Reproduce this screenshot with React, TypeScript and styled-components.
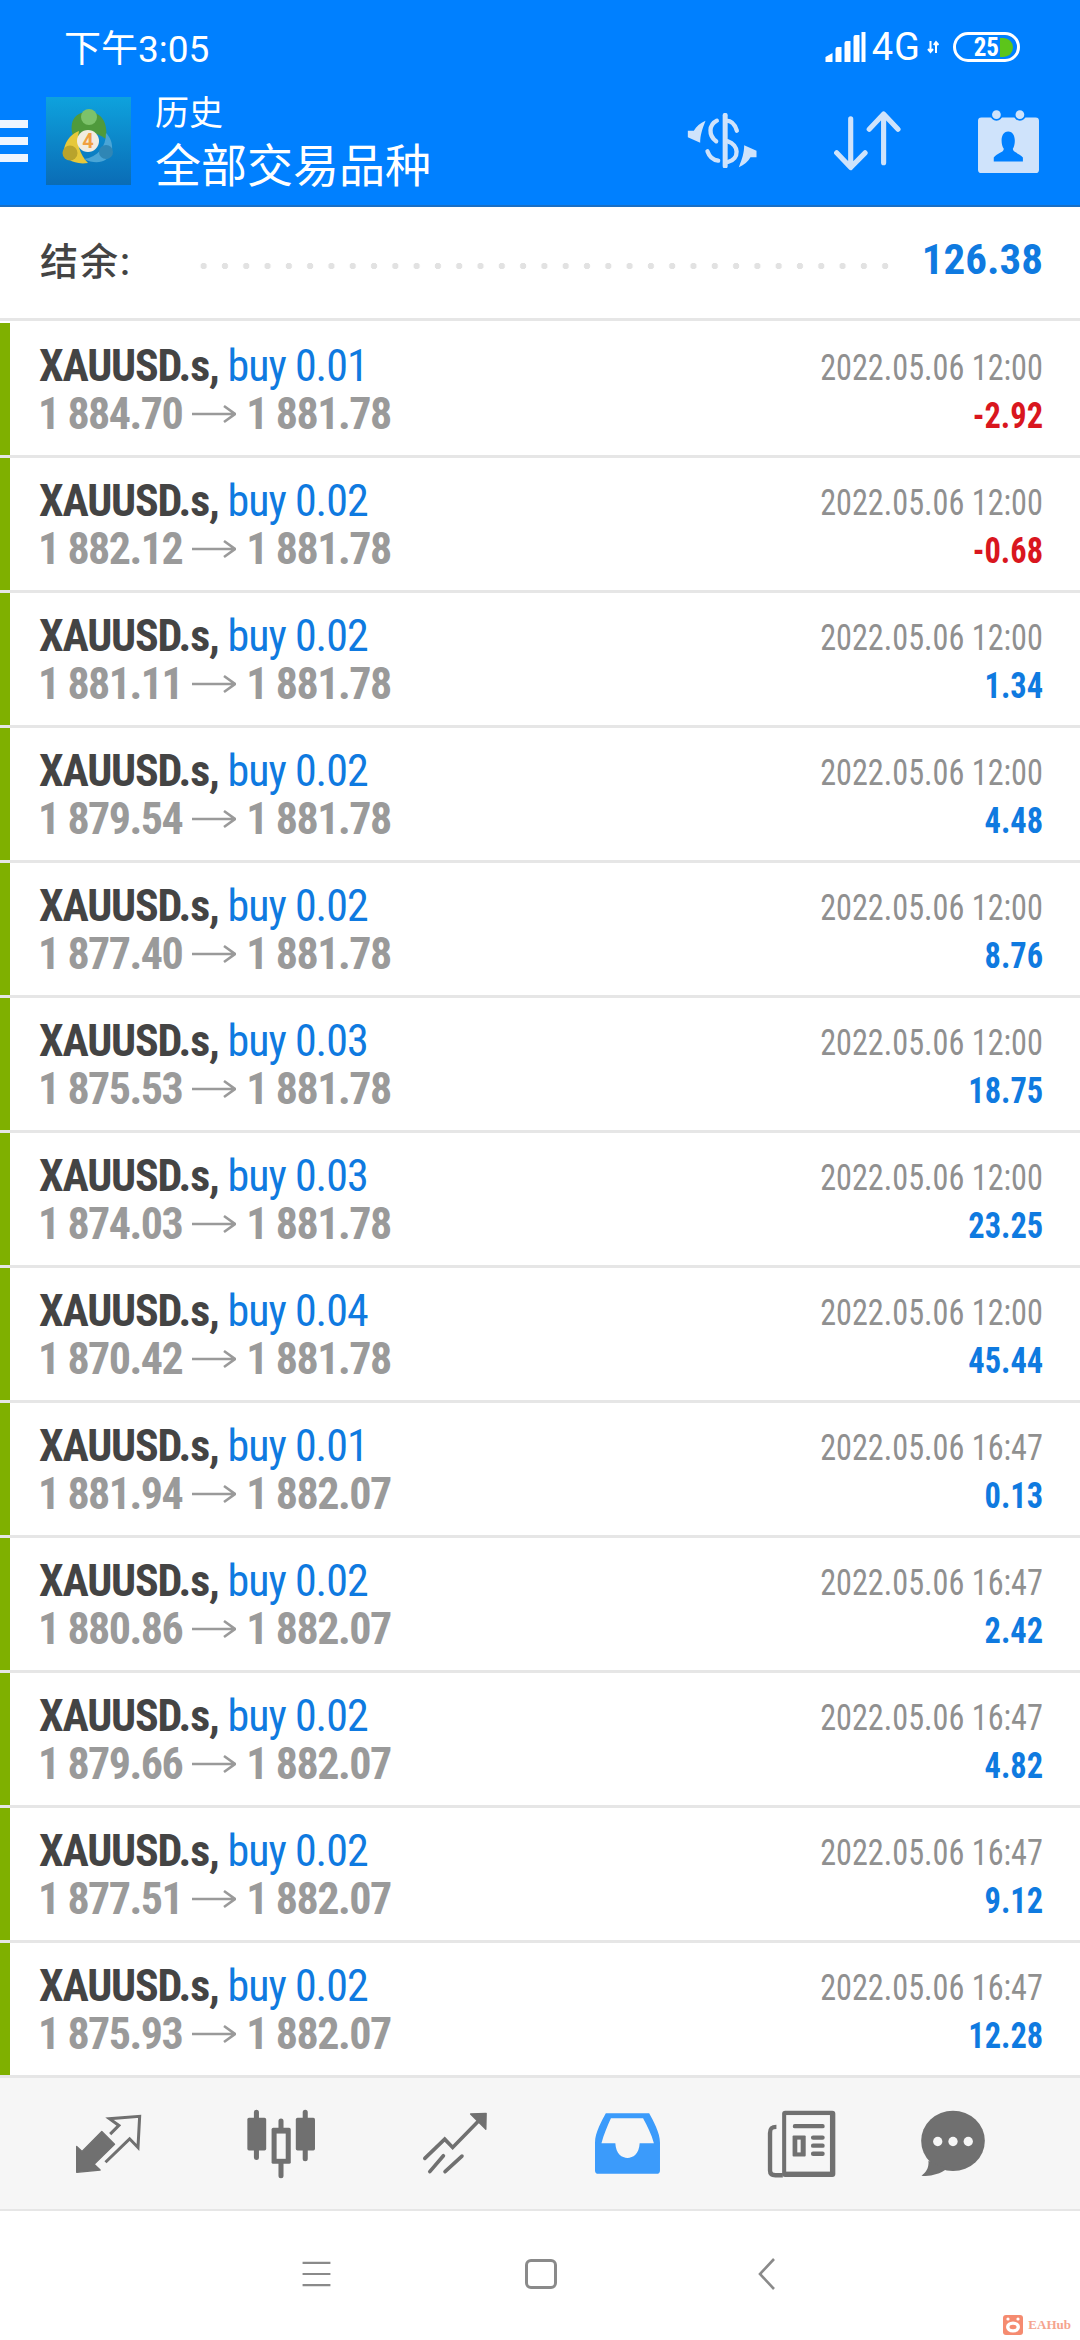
import React from "react";
import styled, { createGlobalStyle } from "styled-components";

type Trade = { lot: string; open: string; close: string; time: string; profit: string };

const trades: Trade[] = [
  { lot: "0.01", open: "1 884.70", close: "1 881.78", time: "2022.05.06 12:00", profit: "-2.92" },
  { lot: "0.02", open: "1 882.12", close: "1 881.78", time: "2022.05.06 12:00", profit: "-0.68" },
  { lot: "0.02", open: "1 881.11", close: "1 881.78", time: "2022.05.06 12:00", profit: "1.34" },
  { lot: "0.02", open: "1 879.54", close: "1 881.78", time: "2022.05.06 12:00", profit: "4.48" },
  { lot: "0.02", open: "1 877.40", close: "1 881.78", time: "2022.05.06 12:00", profit: "8.76" },
  { lot: "0.03", open: "1 875.53", close: "1 881.78", time: "2022.05.06 12:00", profit: "18.75" },
  { lot: "0.03", open: "1 874.03", close: "1 881.78", time: "2022.05.06 12:00", profit: "23.25" },
  { lot: "0.04", open: "1 870.42", close: "1 881.78", time: "2022.05.06 12:00", profit: "45.44" },
  { lot: "0.01", open: "1 881.94", close: "1 882.07", time: "2022.05.06 16:47", profit: "0.13" },
  { lot: "0.02", open: "1 880.86", close: "1 882.07", time: "2022.05.06 16:47", profit: "2.42" },
  { lot: "0.02", open: "1 879.66", close: "1 882.07", time: "2022.05.06 16:47", profit: "4.82" },
  { lot: "0.02", open: "1 877.51", close: "1 882.07", time: "2022.05.06 16:47", profit: "9.12" },
  { lot: "0.02", open: "1 875.93", close: "1 882.07", time: "2022.05.06 16:47", profit: "12.28" },
];

const App = () => {
  return (
    <>
      <GlobalStyle />
      <Page>
        <Header>
          <StatusBar>
            <Clock>下午3:05</Clock>
            <StatusRight>
              <svg width="41" height="30" viewBox="0 0 40 30">
                <path d="M0 30V25L7 21V30Z M10 30V17Q10 15 12 15H16V30Z M19 30V11Q19 9 21 9H25V30Z M28 30V5Q28 3 30 3H34V30Z" fill="#fff" />
                <rect x="36" y="0" width="4" height="30" fill="#fff" />
              </svg>
              <Network>4G</Network>
              <svg width="12" height="14" viewBox="0 0 12 14">
                <path d="M3.5 1V12M1 9L3.5 12L6 9M9 13V2M6.8 5L9 2L11.5 5" stroke="#fff" strokeWidth="2" fill="none" />
              </svg>
              <Battery>
                <BatteryLevel>25</BatteryLevel>
                <BatteryFill />
              </Battery>
            </StatusRight>
          </StatusBar>
          <ToolBar>
            <Burger>
              <span />
              <span />
              <span />
            </Burger>
            <LogoIcon />
            <TitleBlock>
              <SubTitle>历史</SubTitle>
              <Title>全部交易品种</Title>
            </TitleBlock>
            <ToolIcons>
              <SwapIcon />
              <SortIcon />
              <ContactIcon />
            </ToolIcons>
          </ToolBar>
        </Header>

        <BalanceRow>
          <BalanceLabel>结余:</BalanceLabel>
          <Dots />
          <BalanceValue>126.38</BalanceValue>
        </BalanceRow>

        <List>
          {trades.map((t, i) => (
            <Row key={i}>
              <Marker />
              <RowBody>
                <RowLeft>
                  <Line>
                    <Symbol>XAUUSD.s,</Symbol>
                    <Lot>buy {t.lot}</Lot>
                  </Line>
                  <PriceLine>
                    <Price>{t.open}</Price>
                    <ArrowIcon />
                    <Price>{t.close}</Price>
                  </PriceLine>
                </RowLeft>
                <RowRight>
                  <Line>
                    <Time>{t.time}</Time>
                  </Line>
                  <Line>
                    <Profit $loss={t.profit.startsWith("-")}>{t.profit}</Profit>
                  </Line>
                </RowRight>
              </RowBody>
            </Row>
          ))}
        </List>

        <TabBar>
          <TradeIcon />
          <CandleIcon />
          <TrendIcon />
          <InboxIcon />
          <NewsIcon />
          <ChatIcon />
        </TabBar>

        <NavBar>
          <svg width="29" height="26" viewBox="0 0 30 28">
            <path d="M0 2H30M0 14H30M0 26H30" stroke="#8a8a8a" strokeWidth="2.4" />
          </svg>
          <NavSquare />
          <svg width="18" height="34" viewBox="0 0 18 34">
            <path d="M16 2L2 17L16 32" stroke="#8a8a8a" strokeWidth="2.6" fill="none" />
          </svg>
        </NavBar>

        <Watermark>
          <svg width="20" height="20" viewBox="0 0 20 20">
            <rect width="20" height="20" rx="3" fill="#f58b70" />
            <ellipse cx="10" cy="12" rx="7" ry="5.5" fill="#fff" />
            <circle cx="5" cy="4" r="1.6" fill="#fff" />
            <circle cx="15" cy="4" r="1.6" fill="#fff" />
            <ellipse cx="10" cy="12" rx="3.5" ry="2.2" fill="#f58b70" />
          </svg>
          EAHub
        </Watermark>
      </Page>
    </>
  );
};

const LogoIcon = () => (
  <Logo viewBox="0 0 85 88">
    <defs>
      <linearGradient id="logoBg" x1="0" y1="0" x2="0" y2="1">
        <stop offset="0" stopColor="#0ea2dd" />
        <stop offset="1" stopColor="#0a6cb6" />
      </linearGradient>
    </defs>
    <rect width="85" height="88" fill="url(#logoBg)" />
    <path d="M28 42C22 26 28 15 42 15C56 15 62 26 60 42C50 34 38 34 28 42Z" fill="#4f9a3c" />
    <circle cx="43" cy="20" r="8" fill="#7cc26a" />
    <path d="M42 66C28 68 18 62 18 52C20 42 27 36 33 34C30 46 34 58 42 66Z" fill="#e6c83a" />
    <circle cx="24" cy="56" r="7.5" fill="#b9a32c" />
    <path d="M38 62C50 68 62 66 66 54C67 46 64 40 60 36C60 50 52 60 38 62Z" fill="#4aa5d6" />
    <circle cx="60" cy="55" r="7" fill="#2f86b5" />
    <circle cx="42" cy="44" r="11" fill="#f1ece0" />
    <LogoDigit x="42" y="51" textAnchor="middle">4</LogoDigit>
  </Logo>
);

const SwapIcon = () => (
  <HeadIcon width="72" height="55" viewBox="420 335 215 165">
    <path d="M537 342V494" stroke="#cfe3fb" strokeWidth="15" strokeLinecap="round" fill="none" />
    <path d="M572 388C566 368 553 358 540 358M512 358C488 370 486 402 510 420M545 420C578 430 582 472 545 482M484 450C490 468 502 476 516 478" stroke="#cfe3fb" strokeWidth="13" strokeLinecap="round" fill="none" />
    <path d="M478 358C468 385 462 400 462 424L425 408L425 388L443 388C450 375 462 365 478 358Z" fill="#cfe3fb" />
    <path d="M478 358C468 385 462 400 462 424L425 408L425 388L443 388C450 375 462 365 478 358Z" fill="#cfe3fb" transform="rotate(180 528 428)" />
  </HeadIcon>
);

const SortIcon = () => (
  <HeadIcon width="69" height="60" viewBox="845 335 200 175">
    <path d="M896 358V498M855 457L896 500L938 457M992 486V344M950 388L992 344L1034 388" stroke="#cfe3fb" strokeWidth="15" strokeLinecap="round" strokeLinejoin="round" fill="none" />
  </HeadIcon>
);

const ContactIcon = () => (
  <HeadIcon width="63" height="66" viewBox="1265 322 188 197">
    <rect x="1268" y="350" width="182" height="166" rx="10" fill="#cfe3fb" />
    <circle cx="1323" cy="342" r="18" fill="#0080ff" />
    <circle cx="1393" cy="342" r="18" fill="#0080ff" />
    <circle cx="1323" cy="342" r="13" fill="#cfe3fb" />
    <circle cx="1393" cy="342" r="13" fill="#cfe3fb" />
    <path d="M1315 482V470C1325 456 1345 456 1345 444C1335 430 1334 392 1358 392C1382 392 1381 430 1372 444C1372 456 1392 456 1402 470V482Z" fill="#0080ff" />
  </HeadIcon>
);

const ArrowIcon = () => (
  <ArrowSvg width="44" height="20" viewBox="0 0 44 20">
    <path d="M0 10H42M32 2L43 10L32 18" stroke="#9a9a9a" strokeWidth="2.6" fill="none" />
  </ArrowSvg>
);

const TradeIcon = () => (
  <TabIcon width="67" height="62" viewBox="215 155 200 185">
    <path d="M220 255L236 270L295 210L333 248L272 308L290 325L220 332Z" fill="#707070" stroke="#707070" strokeWidth="4" strokeLinejoin="round" />
    <path d="M320 218L346 192L318 172L408 165L403 258L378 232L306 302" stroke="#707070" strokeWidth="9" fill="none" />
  </TabIcon>
);

const CandleIcon = () => (
  <TabIcon width="70" height="70" viewBox="712 142 208 208">
    <path d="M743 152V286M816 178V340M888 152V290" stroke="#707070" strokeWidth="15" strokeLinecap="round" />
    <rect x="716" y="168" width="56" height="97" rx="5" fill="#707070" />
    <rect x="860" y="168" width="57" height="97" rx="5" fill="#707070" />
    <rect x="788" y="198" width="57" height="107" rx="5" fill="#707070" />
    <rect x="803" y="215" width="27" height="75" fill="#f6f6f6" />
  </TabIcon>
);

const TrendIcon = () => (
  <TabIcon width="66" height="63" viewBox="1220 148 198 190">
    <path d="M1228 288L1288 230L1312 255L1395 170" stroke="#707070" strokeWidth="11" strokeLinecap="round" fill="none" />
    <path d="M1366 154L1413 152L1412 200Z" fill="#707070" stroke="#707070" strokeWidth="4" strokeLinejoin="round" />
    <path d="M1284 280L1243 328M1340 281L1289 328" stroke="#707070" strokeWidth="11" strokeLinecap="round" />
  </TabIcon>
);

const InboxIcon = () => (
  <TabIcon width="67" height="63" viewBox="155 150 198 185">
    <path d="M190 153H318C330 175 350 210 350 240V322Q350 332 340 332H168Q158 332 158 322V240C158 210 178 175 190 153Z" fill="#3b9bfb" />
    <path d="M205 168H300C312 190 325 215 332 242H290C288 275 270 285 254 285C238 285 220 275 218 242H177C184 215 195 190 205 168Z" fill="#f6f6f6" />
  </TabIcon>
);

const NewsIcon = () => (
  <TabIcon width="69" height="68" viewBox="655 142 205 202">
    <rect x="700" y="144" width="158" height="197" rx="9" fill="#707070" />
    <rect x="712" y="157" width="130" height="168" fill="#f6f6f6" />
    <path d="M683 192C668 192 664 198 664 210V322C664 332 670 336 680 336H702" stroke="#707070" strokeWidth="13" fill="none" />
    <path d="M738 190H820M792 224H820M792 248H820M792 272H820" stroke="#707070" strokeWidth="13" strokeLinecap="round" />
    <rect x="731" y="218" width="39" height="62" rx="3" fill="#707070" />
    <rect x="745" y="230" width="10" height="38" fill="#f6f6f6" />
  </TabIcon>
);

const ChatIcon = () => (
  <TabIcon width="66" height="67" viewBox="1100 142 198 202">
    <ellipse cx="1199" cy="235" rx="96" ry="91" fill="#707070" />
    <path d="M1125 295C1127 318 1116 332 1104 340C1130 343 1158 336 1180 320Z" fill="#707070" />
    <circle cx="1153" cy="237" r="14" fill="#f6f6f6" />
    <circle cx="1199" cy="237" r="14" fill="#f6f6f6" />
    <circle cx="1245" cy="237" r="14" fill="#f6f6f6" />
  </TabIcon>
);

const GlobalStyle = createGlobalStyle`
  html, body {
    margin: 0;
    padding: 0;
    background: #fff;
  }
`;

const Page = styled.div`
  position: relative;
  width: 1080px;
  height: 2340px;
  overflow: hidden;
  background: #fff;
  font-family: Roboto, "Noto Sans CJK SC", sans-serif;
`;

const Header = styled.header`
  height: 207px;
  box-sizing: border-box;
  background: #0080ff;
  border-bottom: 2px solid #1a6fc4;
  color: #fff;
`;

const StatusBar = styled.div`
  height: 90px;
  box-sizing: border-box;
  padding: 30px 60px 0 64px;
  display: flex;
  justify-content: space-between;
  align-items: flex-start;
`;

const Clock = styled.div`
  font-size: 37px;
  line-height: 40px;
`;

const StatusRight = styled.div`
  display: flex;
  align-items: center;
  height: 34px;
  gap: 6px;
`;

const Network = styled.span`
  font-size: 38px;
  line-height: 34px;
  letter-spacing: 1px;
`;

const Battery = styled.div`
  display: flex;
  align-items: center;
  justify-content: flex-end;
  width: 67px;
  height: 30px;
  box-sizing: border-box;
  margin-left: 8px;
  padding-right: 4px;
  border: 3px solid #fff;
  border-radius: 15px;
`;

const BatteryLevel = styled.span`
  font-size: 25px;
  font-weight: 700;
  font-stretch: 75%;
`;

const BatteryFill = styled.span`
  width: 13px;
  height: 19px;
  margin-left: 1px;
  border-radius: 0 10px 10px 0;
  background: #5cc51a;
`;

const ToolBar = styled.div`
  display: flex;
  align-items: center;
  height: 115px;
  box-sizing: border-box;
  padding-bottom: 14px;
`;

const Burger = styled.div`
  display: flex;
  flex-direction: column;
  gap: 9px;
  width: 28px;

  span {
    height: 8px;
    background: #eef5ff;
  }
`;

const Logo = styled.svg`
  width: 87px;
  height: 88px;
  margin-left: 17px;
`;

const LogoDigit = styled.text`
  font-family: Roboto, sans-serif;
  font-size: 20px;
  font-weight: 700;
  fill: #f0a040;
`;

const TitleBlock = styled.div`
  margin: 4px 0 0 23px;
  display: flex;
  flex-direction: column;
`;

const SubTitle = styled.div`
  font-size: 34px;
  line-height: 46px;
`;

const Title = styled.div`
  font-size: 46px;
  line-height: 60px;
`;

const ToolIcons = styled.div`
  margin-left: auto;
  padding-right: 40px;
  display: flex;
  align-items: center;
  gap: 75px;
`;

const HeadIcon = styled.svg`
  display: block;
`;

const BalanceRow = styled.div`
  display: flex;
  align-items: center;
  height: 114px;
  box-sizing: border-box;
  padding: 0 37px 8px 40px;
  border-bottom: 3px solid #e6e6e6;
`;

const BalanceLabel = styled.div`
  width: 153px;
  font-size: 38px;
  font-weight: 500;
  letter-spacing: 2px;
  color: #444;
`;

const Dots = styled.div`
  width: 703px;
  height: 6px;
  margin-top: 14px;
  background-image: radial-gradient(circle, #e2e2e2 3px, transparent 3.5px);
  background-size: 21.3px 6px;
`;

const BalanceValue = styled.div`
  margin-left: auto;
  font-size: 43px;
  font-weight: 700;
  font-stretch: 87%;
  color: #0f7ae0;
`;

const List = styled.div`
  margin-top: 2px;
`;

const Row = styled.div`
  display: flex;
  height: 135px;
  box-sizing: border-box;
  border-bottom: 3px solid #e6e6e6;
`;

const Marker = styled.div`
  width: 10px;
  background: #7fb000;
`;

const RowBody = styled.div`
  flex: 1;
  display: flex;
  justify-content: space-between;
  padding: 19px 37px 0 29px;
`;

const RowLeft = styled.div`
  display: flex;
  flex-direction: column;
`;

const RowRight = styled.div`
  display: flex;
  flex-direction: column;
  align-items: flex-end;
  margin-top: 2px;
`;

const Line = styled.div`
  display: flex;
  align-items: center;
  height: 48px;
  line-height: 48px;
`;

const PriceLine = styled(Line)`
  height: 47px;
  margin-left: -1px;
`;

const Symbol = styled.span`
  font-size: 44px;
  font-weight: 700;
  font-stretch: 75%;
  letter-spacing: -1.2px;
  color: #444;
`;

const Lot = styled.span`
  margin-left: 9px;
  font-size: 44px;
  font-stretch: 75%;
  letter-spacing: -1px;
  color: #0f7ae0;
`;

const Price = styled.span`
  font-size: 44px;
  font-weight: 700;
  font-stretch: 75%;
  letter-spacing: -1.5px;
  color: #9a9a9a;
`;

const ArrowSvg = styled.svg`
  margin: 0 10px;
`;

const Time = styled.span`
  font-size: 36px;
  font-stretch: 75%;
  color: #909090;
  transform: scaleX(0.895);
  transform-origin: right center;
`;

const Profit = styled.span<{ $loss: boolean }>`
  font-size: 36px;
  font-weight: 700;
  font-stretch: 75%;
  color: ${(p) => (p.$loss ? "#d9161e" : "#0f7ae0")};
  transform: scaleX(0.9);
  transform-origin: right center;
`;

const TabBar = styled.nav`
  display: grid;
  grid-template-columns: 216px 130px 218px 126px 222px 82px;
  justify-items: center;
  align-items: center;
  height: 133px;
  box-sizing: border-box;
  background: #f6f6f6;
  border-bottom: 2px solid #e6e6e6;
`;

const TabIcon = styled.svg`
  display: block;
`;

const NavBar = styled.div`
  display: grid;
  grid-template-columns: 223px 233px 20px;
  align-items: center;
  height: 129px;
  box-sizing: border-box;
  padding: 0 0 3px 302px;
`;

const NavSquare = styled.div`
  width: 32px;
  height: 30px;
  box-sizing: border-box;
  border: 3px solid #8a8a8a;
  border-radius: 6px;
`;

const Watermark = styled.div`
  position: absolute;
  right: 9px;
  bottom: 5px;
  display: flex;
  align-items: center;
  gap: 5px;
  font-family: "Liberation Serif", serif;
  font-size: 13px;
  font-weight: 700;
  color: #f5a48e;
`;

export default App;
